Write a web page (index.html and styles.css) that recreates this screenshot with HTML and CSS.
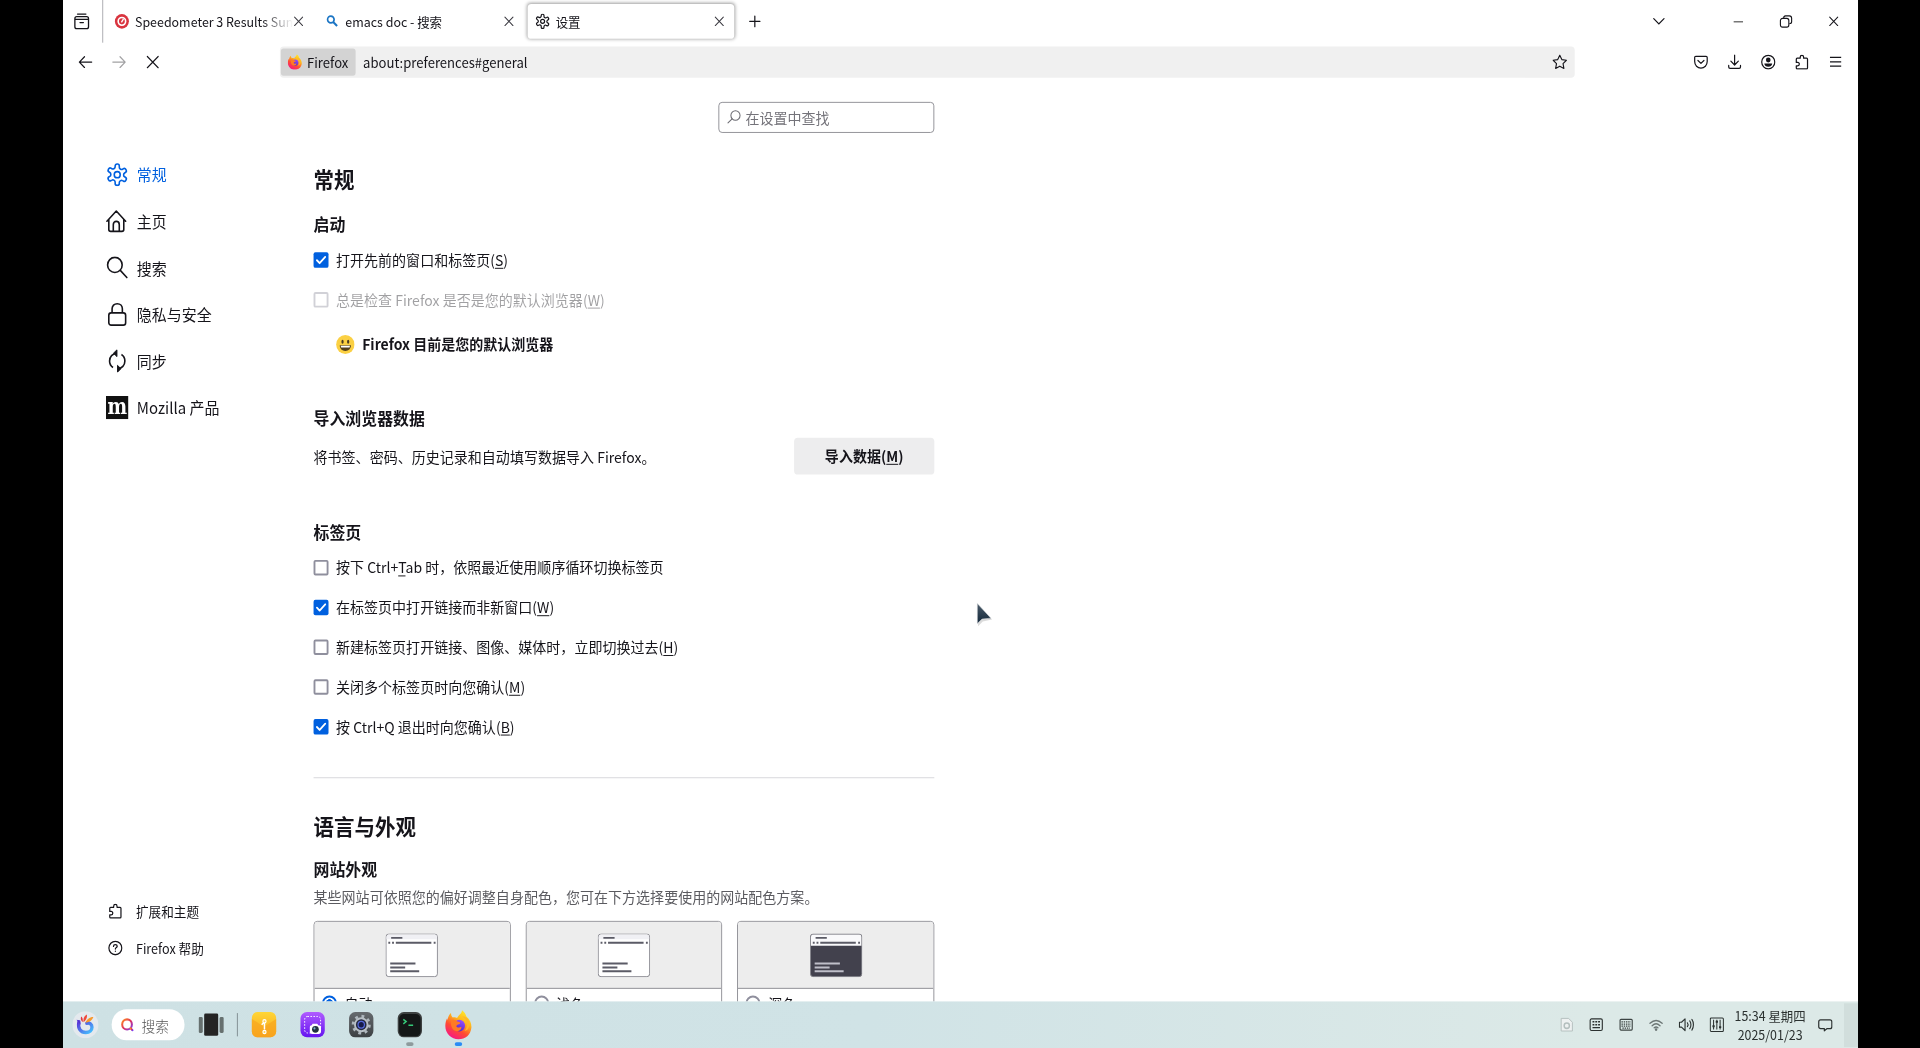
FILE: index.html
```html
<!DOCTYPE html>
<html lang="zh-CN">
<head>
<meta charset="utf-8">
<title>设置</title>
<link rel="stylesheet" href="styles.css">
</head>
<body>
<svg class="defs" aria-hidden="true">
  <defs>
    <linearGradient id="fx-body" x1=".8" y1="0" x2=".25" y2="1"><stop offset="0" stop-color="#fff12e"/><stop offset=".35" stop-color="#ffb61c"/><stop offset=".65" stop-color="#ff4b32"/><stop offset="1" stop-color="#f5128d"/></linearGradient>
    <linearGradient id="fx-globe" x1=".7" y1="0" x2=".3" y2="1"><stop offset="0" stop-color="#9a4dff"/><stop offset="1" stop-color="#4a26c9"/></linearGradient>
    <linearGradient id="ring" x1="0" y1="0" x2="1" y2="1"><stop offset="0" stop-color="#ff8a1e"/><stop offset=".5" stop-color="#e0325e"/><stop offset="1" stop-color="#7a3bf0"/></linearGradient>
    <linearGradient id="blue" x1="0" y1="0" x2="1" y2="1"><stop offset="0" stop-color="#5a35d8"/><stop offset="1" stop-color="#45c3ff"/></linearGradient>
    <linearGradient id="amber" x1="0" y1="0" x2="0" y2="1"><stop offset="0" stop-color="#ffd637"/><stop offset="1" stop-color="#f9a11b"/></linearGradient>
    <linearGradient id="violet" x1="0" y1="0" x2="0" y2="1"><stop offset="0" stop-color="#b05cff"/><stop offset="1" stop-color="#6414f0"/></linearGradient>
    <linearGradient id="steel" x1="0" y1="0" x2="0" y2="1"><stop offset="0" stop-color="#666a6e"/><stop offset="1" stop-color="#3c4043"/></linearGradient>
    <linearGradient id="cursor" x1="0" y1="0" x2="0" y2="1"><stop offset="0" stop-color="#4a5a68"/><stop offset="1" stop-color="#14293c"/></linearGradient>
    <symbol id="gear" viewBox="0 0 24 24"><path fill="none" stroke="currentColor" d="M12.22 1h-.44a2 2 0 0 0-2 2v.9a2 2 0 0 1-1 1.73l-.43.25a2 2 0 0 1-2 0l-.85-.45a2 2 0 0 0-2.73.73l-.22.38a2 2 0 0 0 .73 2.73l.85.5a2 2 0 0 1 1 1.72v.51a2 2 0 0 1-1 1.74l-.85.49a2 2 0 0 0-.73 2.73l.22.38a2 2 0 0 0 2.73.73l.85-.45a2 2 0 0 1 2 0l.43.25a2 2 0 0 1 1 1.73V21a2 2 0 0 0 2 2h.44a2 2 0 0 0 2-2v-.9a2 2 0 0 1 1-1.73l.43-.25a2 2 0 0 1 2 0l.85.45a2 2 0 0 0 2.73-.73l.22-.39a2 2 0 0 0-.73-2.73l-.85-.48a2 2 0 0 1-1-1.74v-.5a2 2 0 0 1 1-1.74l.85-.49a2 2 0 0 0 .73-2.73l-.22-.38a2 2 0 0 0-2.73-.73l-.85.45a2 2 0 0 1-2 0l-.43-.25a2 2 0 0 1-1-1.73V3a2 2 0 0 0-2-2z"/><circle cx="12" cy="12" r="3.2" fill="none" stroke="currentColor"/></symbol>
    <symbol id="close" viewBox="0 0 16 16"><path d="M3.700 3.700l8.600 8.600M12.300 3.700l-8.600 8.600" fill="none" stroke="currentColor" stroke-width="1.100" stroke-linecap="round"/></symbol>
    <symbol id="puzzle" viewBox="0 0 16 16"><path fill="none" stroke="currentColor" stroke-width="1.300" stroke-linejoin="round" d="M2 6.500V5a1 1 0 0 1 1-1h3.200V2.800a1.800 1.800 0 0 1 3.600 0V4H13a1 1 0 0 1 1 1v9a1 1 0 0 1-1 1H3a1 1 0 0 1-1-1v-2.200h1.500a1.700 1.700 0 0 0 0-3.500H2z"/></symbol>
    <symbol id="firefox" viewBox="0 0 32 32"><path fill="url(#fx-body)" d="M20 0c3 2 4.500 4.500 5 7 4 3 6 7.500 5.800 12C30 27 24 32 16 32S1 26 1 17.500C1 14 2 11 3 9l.5 2C4 8 5 5 7.500 3c0 2 .5 3.500 2 5 2-.5 3.500-.3 5 .5C16 5 20 4 20 0z"/><circle cx="17" cy="17" r="6.500" fill="url(#fx-globe)"/><path fill="#ff7a24" d="M8 11c3-1 5 0 6.500 1.500 2 .2 3.500 1 3.500 1.800-.5 1.700-4 1-4.500 3.500 1 2 4 1.500 6 .5 0 4-4 6-8 4-3-1.700-5-6-3.500-11.300z"/><path fill="#ffb52a" d="M20 7c6 3 8 10 3 16 5-1 7-7 4.500-12C26 8 23 7 20 7z"/></symbol>
    <symbol id="check" viewBox="0 0 16 16"><path d="M3.600 8.200l2.900 3 6-6.400" fill="none" stroke="#fff" stroke-width="1.900" stroke-linecap="round" stroke-linejoin="round"/></symbol>
    <symbol id="window-light" viewBox="0 0 56 45"><rect x=".5" y=".5" width="55" height="44" rx="3" fill="#fff" stroke="#85858c"/><path d="M1 6V3.500A2.500 2.500 0 0 1 3.500 1h49A2.500 2.500 0 0 1 55 3.500V6z" fill="#f0f0f4"/><path d="M6 4.500h12M3 9.500h2M7 9.500h2M11 9.500h38M51.500 9.500h2M5 31h27M5 35h16M5 39h31" stroke="#5b5b66" stroke-width="2"/></symbol>
    <symbol id="window-dark" viewBox="0 0 56 45"><rect x=".5" y=".5" width="55" height="44" rx="3" fill="#42414d" stroke="#85858c"/><path d="M1 12.500v-9A2.500 2.500 0 0 1 3.500 1h49A2.500 2.500 0 0 1 55 3.500v9z" fill="#f9f9fb"/><path d="M6 4.500h12M3 9.500h2M7 9.500h2M11 9.500h38M51.500 9.500h2" stroke="#5b5b66" stroke-width="2"/><path d="M5 31h27M5 35h16M5 39h31" stroke="#bfbfc9" stroke-width="2"/></symbol>
  </defs>
</svg>

<div class="desktop">
  <header class="tabbar">
    <div class="view-button"><svg width="18" height="18" viewBox="0 0 18 18" fill="none" stroke="currentColor" stroke-width="1.400" stroke-linecap="round" stroke-linejoin="round"><path d="M4.500 1.500h9"/><path d="M1.700 6.200c0-1.200.8-2 2-2h10.600c1.200 0 2 .8 2 2v8.300c0 1.200-.8 2-2 2H3.700c-1.200 0-2-.8-2-2zM1.700 7h14.600M7.200 10.300h3.600"/></svg></div>
    <div class="tab">
      <svg width="16" height="16" viewBox="0 0 16 16"><circle cx="8" cy="8" r="7.500" fill="#d9343f"/><circle cx="8" cy="8" r="4" fill="none" stroke="#fff" stroke-width="1.700"/><path d="M7.500 9l2.200-3.500" stroke="#fff" stroke-width="1.400"/></svg>
      <span class="tab-title faded">Speedometer 3 Results Summary</span>
      <svg class="tab-close"><use href="#close"/></svg>
    </div>
    <div class="tab">
      <svg width="16" height="16" viewBox="0 0 16 16" fill="none" stroke="#1b75c4" stroke-width="1.800"><circle cx="6.500" cy="6" r="3.500"/><path d="M9 8.700l4.200 4.200" stroke-width="2.200"/></svg>
      <span class="tab-title">emacs doc - 搜索</span>
      <svg class="tab-close"><use href="#close"/></svg>
    </div>
    <div class="tab active">
      <svg class="tab-gear"><use href="#gear"/></svg>
      <span class="tab-title">设置</span>
      <svg class="tab-close"><use href="#close"/></svg>
    </div>
    <svg class="new-tab" width="16" height="16" viewBox="0 0 16 16"><path d="M8 2.500v11M2.500 8h11" stroke="currentColor" stroke-width="1.300" stroke-linecap="round"/></svg>
    <div class="window-controls">
      <svg class="all-tabs" width="16" height="16" viewBox="0 0 16 16" fill="none" stroke="currentColor" stroke-width="1.300" stroke-linecap="round"><path d="M2.500 5.200L8 10.700l5.500-5.500"/></svg>
      <svg width="16" height="16" viewBox="0 0 16 16"><path d="M3 8.500h10" stroke="#777" stroke-width="1.600"/></svg>
      <svg width="16" height="16" viewBox="0 0 16 16" fill="none" stroke="currentColor" stroke-width="1.200"><rect x="2" y="5" width="9" height="9" rx="2.200"/><path d="M5.500 4.500c0-1.200.8-2.200 2-2.200h4c1.500 0 2.500 1 2.500 2.500v3.700c0 1.200-.8 2-2.500 2"/></svg>
      <svg width="16" height="16"><use href="#close"/></svg>
    </div>
  </header>

  <nav class="navbar">
    <div class="nav-buttons">
      <svg width="16" height="16" viewBox="0 0 16 16" fill="none" stroke="currentColor" stroke-width="1.300" stroke-linecap="round" stroke-linejoin="round"><path d="M14.700 8H1.500M7 2.500L1.500 8 7 13.500"/></svg>
      <svg class="disabled" width="16" height="16" viewBox="0 0 16 16" fill="none" stroke="currentColor" stroke-width="1.300" stroke-linecap="round" stroke-linejoin="round"><path d="M1.300 8h13.200M9 2.500L14.500 8 9 13.500"/></svg>
      <svg width="16" height="16" viewBox="0 0 16 16" fill="none" stroke="currentColor" stroke-width="1.200" stroke-linecap="round"><path d="M2.200 2.200l11.600 11.600M13.800 2.200L2.200 13.800"/></svg>
    </div>
    <div class="urlbar">
      <div class="identity"><svg width="16" height="16"><use href="#firefox"/></svg><span>Firefox</span></div>
      <span class="url">about:preferences#general</span>
      <svg width="16" height="16" viewBox="0 0 16 16" fill="none" stroke="currentColor" stroke-width="1.200" stroke-linejoin="round"><path d="M8 .9l2.200 4.500 4.900.7-3.600 3.500.9 4.900L8 12.200l-4.400 2.300.9-4.900L.9 6.100l4.900-.7z"/></svg>
    </div>
    <div class="toolbar-icons">
      <svg width="16" height="16" viewBox="0 0 16 16" fill="none" stroke="currentColor" stroke-width="1.300" stroke-linecap="round" stroke-linejoin="round"><path d="M2.500 2h11c.7 0 1.200.5 1.200 1.200V7.500a6.700 6.700 0 0 1-13.400 0V3.200C1.300 2.500 1.800 2 2.500 2z"/><path d="M4.800 6.300L8 9.300l3.200-3"/></svg>
      <svg width="16" height="16" viewBox="0 0 16 16" fill="none" stroke="currentColor" stroke-width="1.300" stroke-linecap="round" stroke-linejoin="round"><path d="M8 .7v10M4 7l4 4 4-4M1.700 11.500v1.500c0 .8.600 1.500 1.500 1.500h9.600c.9 0 1.500-.7 1.500-1.500v-1.500"/></svg>
      <svg width="16" height="16" viewBox="0 0 16 16"><circle cx="8" cy="8" r="7" fill="none" stroke="currentColor" stroke-width="1.300"/><circle cx="8" cy="5.800" r="2.500" fill="currentColor"/><path d="M3.800 9.500h8.400c0 2-2 3.400-4.200 3.400S3.800 11.500 3.800 9.500z" fill="currentColor"/></svg>
      <svg width="16" height="16"><use href="#puzzle"/></svg>
      <svg width="16" height="16" viewBox="0 0 16 16"><path d="M2 3.200h12M2 7.700h12M2 12.200h12" stroke="currentColor" stroke-width="1.300"/></svg>
    </div>
  </nav>

  <div class="page">
    <aside class="sidebar">
      <ul class="categories">
        <li class="selected"><svg class="cat-icon gear-icon"><use href="#gear"/></svg>常规</li>
        <li><svg class="cat-icon" viewBox="0 0 24 24" fill="none" stroke="currentColor" stroke-width="1.700" stroke-linecap="round" stroke-linejoin="round"><path d="M1 12L11 1.500 21 12M3 10v10.500c0 1.300.8 2 2 2h12c1.300 0 2-.8 2-2V10M7.800 22v-6.500c0-2 1.200-3.300 3.200-3.300s3.200 1.300 3.200 3.300V22"/></svg>主页</li>
        <li><svg class="cat-icon" viewBox="0 0 24 24" fill="none" stroke="currentColor" stroke-width="1.700" stroke-linecap="round"><circle cx="9.500" cy="9" r="7.800"/><path d="M15.300 14.700l7 7.300"/></svg>搜索</li>
        <li><svg class="cat-icon" viewBox="0 0 24 24" fill="none" stroke="currentColor" stroke-width="1.700"><rect x="3" y="10.500" width="18" height="12.500" rx="2.500"/><path d="M6.500 10.500V6.300c0-3 2.300-5.300 5.500-5.300s5.500 2.300 5.500 5.300v4.200"/></svg>隐私与安全</li>
        <li><svg class="cat-icon" viewBox="0 0 24 24" fill="none" stroke="currentColor" stroke-width="1.700" stroke-linejoin="round"><path d="M11.500 4C7 4.300 3.800 7.700 3.800 12c0 2.800 1.300 5.200 3.700 6.700M12.500 20c4.500-.3 7.700-3.700 7.700-8 0-2.800-1.300-5.200-3.700-6.700"/><path fill="currentColor" stroke-width="1" d="M11.700 .5v7L8 4zM12.300 16.500v7L16 20z"/></svg>同步</li>
        <li><svg class="cat-icon" viewBox="0 0 24 24"><rect width="24" height="24" fill="#111"/><text class="moz" x="12" y="18.500" text-anchor="middle" textLength="21" lengthAdjust="spacingAndGlyphs">m</text></svg>Mozilla 产品</li>
      </ul>
      <ul class="links">
        <li><svg width="16" height="16"><use href="#puzzle"/></svg>扩展和主题</li>
        <li><svg width="16" height="16" viewBox="0 0 16 16" fill="none" stroke="currentColor" stroke-width="1.300" stroke-linecap="round"><circle cx="8" cy="8" r="6.900"/><path d="M6 6.300c0-1.200.9-1.900 2-1.900s2 .7 2 1.800c0 1.300-2 1.400-2 2.900M8 11.300v.1"/></svg>Firefox 帮助</li>
      </ul>
    </aside>

    <main class="prefs">
      <div class="search-box"><svg width="16" height="16" viewBox="0 0 16 16" fill="none" stroke="#6b6b72" stroke-width="1.100" stroke-linecap="round"><circle cx="9.300" cy="6" r="4.900"/><path d="M5.700 9.500L1.300 13.700"/></svg>在设置中查找</div>

      <h1>常规</h1>
      <h2>启动</h2>
      <div class="checks startup">
        <label><i class="box on"><svg><use href="#check"/></svg></i><span>打开先前的窗口和标签页(<u>S</u>)</span></label>
        <label class="off"><i class="box"></i><span>总是检查 Firefox 是否是您的默认浏览器(<u>W</u>)</span></label>
      </div>
      <div class="default-browser">
        <svg width="20" height="20" viewBox="0 0 20 20"><circle cx="10" cy="10" r="9.800" fill="#fbd043"/><ellipse cx="7" cy="7.200" rx="1.200" ry="2" fill="#4a3a20"/><ellipse cx="13" cy="7.200" rx="1.200" ry="2" fill="#4a3a20"/><path d="M4 10.800h12c0 3.600-2.600 5.800-6 5.800s-6-2.200-6-5.800z" fill="#54401c"/><path d="M5 11.300h10l-.5 1.900h-9z" fill="#fff"/></svg>
        <span>Firefox 目前是您的默认浏览器</span>
      </div>

      <h2 class="import-title">导入浏览器数据</h2>
      <div class="import-row"><span>将书签、密码、历史记录和自动填写数据导入 Firefox。</span><button>导入数据(<u>M</u>)</button></div>

      <h2 class="tabs-title">标签页</h2>
      <div class="checks">
        <label><i class="box"></i><span>按下 Ctrl+<u>T</u>ab 时，依照最近使用顺序循环切换标签页</span></label>
        <label><i class="box on"><svg><use href="#check"/></svg></i><span>在标签页中打开链接而非新窗口(<u>W</u>)</span></label>
        <label><i class="box"></i><span>新建标签页打开链接、图像、媒体时，立即切换过去(<u>H</u>)</span></label>
        <label><i class="box"></i><span>关闭多个标签页时向您确认(<u>M</u>)</span></label>
        <label><i class="box on"><svg><use href="#check"/></svg></i><span>按 Ctrl+Q 退出时向您确认(<u>B</u>)</span></label>
      </div>

      <hr>
      <h1 class="language-title">语言与外观</h1>
      <h2 class="appearance-title">网站外观</h2>
      <p class="description">某些网站可依照您的偏好调整自身配色，您可在下方选择要使用的网站配色方案。</p>
      <div class="themes">
        <div class="theme"><div class="preview"><svg width="56" height="45"><use href="#window-light"/></svg></div><div class="choice"><i class="radio on"></i><span>自动</span></div></div>
        <div class="theme"><div class="preview"><svg width="56" height="45"><use href="#window-light"/></svg></div><div class="choice"><i class="radio"></i><span>浅色</span></div></div>
        <div class="theme"><div class="preview"><svg width="56" height="45"><use href="#window-dark"/></svg></div><div class="choice"><i class="radio"></i><span>深色</span></div></div>
      </div>
    </main>
  </div>

  <footer class="taskbar">
    <svg class="launcher" width="28" height="28" viewBox="0 0 28 28"><circle cx="14" cy="14" r="14" fill="#e4e9ee"/><path d="M7 11c-1.500 7 2 11 7.500 11 4 0 6.500-2.500 6.500-5.500S18.500 11.800 15.500 12.500" fill="none" stroke="url(#blue)" stroke-width="3.600" stroke-linecap="round"/><path d="M4.500 9c2 0 4 1.500 4.500 5z" fill="#5330cf"/><path d="M9.500 5.500c1.500 1.200 2 3 1.500 6C9 9.500 8.500 7.500 9.500 5.500z" fill="#e3343f"/><path d="M15.500 3.500c.5 3-.5 5.500-3.500 8-.5-3.500.5-6.500 3.500-8z" fill="#f0483a"/><path d="M22.500 6c-1 3-3.500 5-8.500 6 1.500-3.500 4-6 8.500-6z" fill="#f79a2d"/></svg>
    <div class="task-search"><svg width="14" height="14" viewBox="0 0 14 14" fill="none" stroke="url(#ring)" stroke-width="2.200" stroke-linecap="round"><circle cx="6.500" cy="6.700" r="5.200"/><path d="M10.300 10.700l2 2.100"/></svg>搜索</div>
    <svg class="task-view" width="27" height="26" viewBox="0 0 27 26"><rect x="0" y="5" width="4.500" height="16.500" rx="1.500" fill="#66706f"/><rect x="22.500" y="5" width="4.500" height="16.500" rx="1.500" fill="#66706f"/><rect x="6" y="1.500" width="15" height="23" rx="1.500" fill="#242424"/></svg>
    <div class="divider"></div>
    <div class="apps">
      <div class="app"><svg viewBox="0 0 28 28"><rect x="1" y="1" width="26" height="26" rx="6" fill="url(#amber)"/><path d="M1 8l13 8 13-8v13a6 6 0 0 1-6 6H7a6 6 0 0 1-6-6z" fill="#f8a51e" opacity=".65"/><path d="M14.500 11v8M14.500 11l-3 3" fill="none" stroke="#fff" stroke-width="1.600"/><circle cx="14.500" cy="10.500" r="1.700" fill="#ffd24d" stroke="#fff" stroke-width="1.200"/><circle cx="14.500" cy="21.500" r="1.700" fill="#ffd24d" stroke="#fff" stroke-width="1.200"/></svg></div>
      <div class="app"><svg viewBox="0 0 28 28"><rect x="1" y="1" width="26" height="26" rx="7" fill="url(#violet)"/><rect x="5.500" y="5.500" width="17" height="17" rx="3" fill="none" stroke="#fff" stroke-dasharray="1.600 1.600"/><path d="M11 16.500c0-1.200.8-2 2-2l1-1.500h5l1 1.500c2 0 3 .8 3 2V21c0 1.500-1 2.500-2.500 2.500h-7c-1.500 0-2.500-1-2.500-2.500z" fill="#fff"/><circle cx="17" cy="18.800" r="3.600" fill="#22313f"/><circle cx="16" cy="17.800" r="1.100" fill="#7fb4d8"/></svg></div>
      <div class="app"><svg viewBox="0 0 28 28"><rect x="1" y="1" width="26" height="26" rx="6.500" fill="url(#steel)"/><circle cx="14" cy="14" r="8.700" fill="none" stroke="#aeb6bd" stroke-width="3" stroke-dasharray="3 3.830"/><circle cx="14" cy="14" r="7.700" fill="#b8bfc5"/><circle cx="14" cy="14" r="5.700" fill="#24283e"/><circle cx="14" cy="14" r="3.400" fill="#161b48" stroke="#5569dc" stroke-width="1.300"/></svg></div>
      <div class="app running"><svg viewBox="0 0 28 28"><rect x="1" y="1" width="26" height="26" rx="6.500" fill="#3d4141"/><rect x="2.500" y="3" width="23" height="23" rx="5" fill="#141717"/><path d="M7 8.500l3 2.300-3 2.300" fill="none" stroke="#35c978" stroke-width="1.600"/><path d="M12.500 14.500h5" stroke="#35c978" stroke-width="1.500"/></svg></div>
      <div class="app running current"><svg class="big"><use href="#firefox"/></svg></div>
    </div>
    <div class="tray">
      <svg width="16" height="16" viewBox="0 0 16 16" fill="#eef1f1" stroke="#b4bfbe"><path d="M2.500 1.500h8l4 4v9h-12z"/><circle cx="8.500" cy="9" r="2.800" fill="none" stroke-width="1.600"/></svg>
      <svg width="16" height="16" viewBox="0 0 16 16" fill="none" stroke="currentColor" stroke-width="1.200"><rect x="1.500" y="2" width="13" height="12" rx="1.500"/><path d="M4 5h2M7 5h2M10 5h2M4 8h2M7 8h2M10 8h2M4 11h8" stroke-width="1.500"/></svg>
      <svg width="16" height="16" viewBox="0 0 16 16" fill="none" stroke="#3c4443" stroke-width="1.200"><rect x="1.500" y="2.500" width="13" height="11" rx="1"/><path d="M3 5h10M3 7.300h10M3 9.500h10M4 11.500h8" stroke-width="1.300" stroke-dasharray="1.500 .9"/></svg>
      <svg width="16" height="16" viewBox="0 0 16 16" fill="none" stroke="#6c7675" stroke-width="1.400" stroke-linecap="round"><path d="M1.500 6.500C5.500 3 10.500 3 14.500 6.500M3.800 9C6.300 6.700 9.700 6.700 12.200 9M6 11.200c1.200-1 2.800-1 4 0"/><circle cx="8" cy="13" r=".7" fill="#59605f"/></svg>
      <svg width="17" height="16" viewBox="0 0 17 16" fill="none" stroke="currentColor" stroke-width="1.200" stroke-linecap="round" stroke-linejoin="round"><path d="M1 5.500v5h2.200L7 14V2L3.200 5.500zM9.500 6c.8 1 .8 3 0 4M12 4c1.700 2 1.700 6 0 8M14.300 2.500c2.200 3 2.200 8 0 11"/></svg>
      <svg width="16" height="16" viewBox="0 0 16 16" fill="none" stroke="currentColor" stroke-width="1.100"><rect x="1" y="1" width="14" height="14" rx="1"/><path d="M4.500 3v10M8 3v10M11.500 3v10"/><path d="M3.300 9.500h2.400M6.800 5h2.400M10.300 10.500h2.400" stroke-width="2"/></svg>
      <div class="clock">15:34 星期四<br>2025/01/23</div>
      <svg width="16" height="16" viewBox="0 0 16 16" fill="none" stroke="currentColor" stroke-width="1.300" stroke-linejoin="round"><path d="M3 3h10a2 2 0 0 1 2 2v5a2 2 0 0 1-2 2h-3l-3 2.300V12H3a2 2 0 0 1-2-2V5a2 2 0 0 1 2-2z"/></svg>
      <div class="show-desktop"></div>
    </div>
  </footer>

  <svg class="pointer" viewBox="0 0 18 26"><path d="M1 1v22l5-5 10-2z" fill="#999" opacity=".35" transform="translate(.8 1.500)"/><path d="M1 1v20.500l5-4.500 9.500-1z" fill="url(#cursor)" stroke="#cfd3d7" stroke-width=".6"/></svg>
</div>
</body>
</html>
```

FILE: styles.css
```css
* { box-sizing: border-box; }

html, body { height: 100%; }

body {
  margin: 0;
  background: #000;
  overflow: hidden;
  font-family: "Noto Sans CJK SC", "Noto Sans", sans-serif;
  font-size: 15px;
  color: #15141a;
}

svg { display: block; flex: none; }
.defs { width: 0; height: 0; position: absolute; }

/* A 1920x1080 desktop fitted between the black side bars */
.desktop {
  position: relative;
  width: 1920px;
  height: 1080px;
  margin-left: 63px;
  display: flex;
  flex-direction: column;
  background: #fff;
  overflow: hidden;
  transform-origin: 0 0;
  transform: scale(.9349, .97037);
}

/* Tab strip */
.tabbar { display: flex; align-items: center; height: 44px; flex: none; font-size: 13.3px; }
.view-button { width: 43px; height: 44px; padding-left: 11px; display: flex; align-items: center; border-right: 1px solid #a9a9ae; margin-right: 2px; }
.tab { width: 221px; height: 36px; margin: 0 2px; padding: 0 8px; display: flex; align-items: center; border-radius: 4px; }
.tab.active { box-shadow: 0 0 4px rgba(0, 0, 0, .4); }
.tab-title { flex: 1; margin-left: 6px; padding-top: 1px; white-space: nowrap; overflow: hidden; line-height: 24px; }
.tab-title.faded { mask-image: linear-gradient(to left, transparent, #000 34px); margin-right: -2px; }
.tab-close { width: 16px; height: 16px; color: #3a3940; }
.tab-gear { width: 16px; height: 16px; stroke-width: 1.9; }
.new-tab { margin-left: 12px; }
.window-controls { margin-left: auto; display: flex; gap: 35px; padding-right: 18px; }
.all-tabs { margin-right: 34px; }

/* Navigation toolbar */
.navbar { display: flex; align-items: center; height: 40px; flex: none; }
.nav-buttons { display: flex; gap: 20px; width: 232px; padding-left: 16px; }
.disabled { opacity: .4; }
.urlbar { width: 1385px; height: 32px; padding: 2px 8px 2px 1px; display: flex; align-items: center; background: #f0f0f0; border-radius: 4px; font-size: 14px; }
.identity { width: 80px; height: 28px; padding-left: 7px; display: flex; align-items: center; gap: 5px; background: #d3d3d3; border-radius: 3px; }
.url { flex: 1; margin-left: 8px; }
.toolbar-icons { margin-left: auto; display: flex; gap: 20px; padding-right: 16px; }

/* Preferences page */
.page { flex: 1; min-height: 0; display: flex; overflow: hidden; }
.sidebar { width: 268px; padding: 71.8px 0 36.5px 46px; display: flex; flex-direction: column; justify-content: space-between; }
.sidebar ul { margin: 0; padding: 0; list-style: none; }
.sidebar li { display: flex; align-items: center; }
.categories li { height: 48px; gap: 9px; font-size: 16px; }
.categories .selected { color: #0060df; }
.cat-icon { width: 24px; height: 24px; }
.gear-icon { stroke-width: 1.7; }
.moz { font: bold 22px "DejaVu Serif", serif; fill: #fff; }
.links { font-size: 13.5px; }
.links li { height: 37.5px; padding-left: 2px; gap: 14px; }

.prefs { width: 664px; padding-top: 21px; }
.search-box { width: 231px; height: 32px; margin-left: auto; padding-left: 8px; display: flex; align-items: center; gap: 4px; border: 1px solid #8f8f96; border-radius: 4px; color: #74737a; }
h1, h2, p { margin: 0; }
h1 { font-size: 21.9px; line-height: 30px; margin-top: 33px; font-weight: 700; }
h2 { font-size: 17px; line-height: 24px; margin-top: 19px; font-weight: 700; }
.checks { display: flex; flex-direction: column; gap: 16px; margin-top: 12px; }
.checks label { display: flex; align-items: center; height: 25px; gap: 8px; line-height: 25px; }
.checks .off { opacity: .4; }
.box { width: 16px; height: 16px; flex: none; border: 2px solid #8f8f9d; border-radius: 2px; background: #fff; }
.box.on { border: 0; background: #0060df; }
.box svg { width: 16px; height: 16px; }
u { text-underline-offset: 2px; text-decoration-thickness: 1px; }
.default-browser { display: flex; align-items: center; gap: 8px; height: 24px; margin: 21.5px 0 0 24px; font-weight: 700; }
.import-title { margin-top: 52.5px; }
.import-row { display: flex; align-items: center; justify-content: space-between; margin-top: 8px; height: 38px; }
button { width: 150px; height: 38px; border: 0; border-radius: 4px; background: #ededee; color: inherit; font: 700 15px/22px "Noto Sans CJK SC", "Noto Sans", sans-serif; padding: 0; }
.tabs-title { margin-top: 47px; }
hr { width: 100%; height: 1px; border: 0; margin: 40px 0 0; background: #d7d7db; }
.language-title { margin-top: 34px; }
.appearance-title { margin-top: 18px; }
.description { margin-top: 5.5px; line-height: 22px; color: #5b5b60; white-space: nowrap; }
.themes { display: flex; gap: 16px; margin-top: 13.5px; }
.theme { flex: 1; height: 110px; border: 1px solid #8f8f96; border-radius: 4px; overflow: hidden; }
.preview { height: 69px; padding-top: 12px; display: flex; justify-content: center; background: #ededed; border-bottom: 1px solid #8f8f96; }
.choice { display: flex; align-items: center; gap: 8px; height: 29px; padding-left: 8px; }
.choice span { margin-top: 2px; }
.radio { width: 16px; height: 16px; border: 2px solid #8f8f9d; border-radius: 50%; }
.radio.on { border-color: #0060df; background: radial-gradient(circle, #0060df 4px, #fff 4.5px); }

/* Taskbar */
.taskbar { flex: none; height: 48px; display: flex; align-items: center; padding-left: 10px; background: linear-gradient(90deg, #cee1e4, #d0e3e6 45%, #dce9e7 85%); }
.task-search { width: 78px; height: 32px; margin-left: 14px; padding-left: 9px; display: flex; align-items: center; gap: 9px; background: #fff; border-radius: 16px; font-size: 14.7px; font-weight: 300; color: #555; }
.task-search svg { margin-left: 1px; margin-right: -1px; }
.task-view { margin-left: 14.5px; margin-right: .5px; }
.divider { width: 1px; height: 24px; margin-left: 14px; background: #7f8c90; }
.apps { display: flex; margin-left: 2px; }
.app { position: relative; width: 52px; height: 48px; display: flex; align-items: center; justify-content: center; }
.app svg { width: 28px; height: 28px; }
.app .big { width: 30px; height: 32px; }
.running::after { content: ""; position: absolute; left: 22px; bottom: 2px; width: 8px; height: 4px; border-radius: 2px; background: #8e9a9c; }
.current::after { background: #2a8cf5; }
.tray { margin-left: auto; height: 48px; display: flex; align-items: center; gap: 16px; color: #2b3130; }
.clock { width: 80px; margin: 2px -6.5px 0 -6.5px; text-align: center; font-size: 13.3px; line-height: 20px; white-space: nowrap; }
.clock + svg { margin-left: 1px; margin-right: -3.5px; }
.show-desktop { width: 15px; height: 45px; background: #d1dedc; }

.pointer { position: absolute; left: 977px; top: 620.5px; width: 18px; height: 26px; }
```
